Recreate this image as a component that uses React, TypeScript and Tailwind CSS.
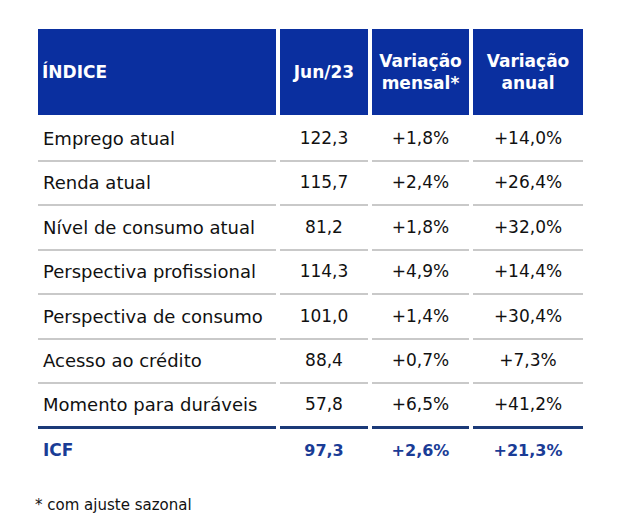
import React from 'react';

const rows = [
    { name: 'Emprego atual', jun: '122,3', mensal: '+1,8%', anual: '+14,0%' },
    { name: 'Renda atual', jun: '115,7', mensal: '+2,4%', anual: '+26,4%' },
    { name: 'Nível de consumo atual', jun: '81,2', mensal: '+1,8%', anual: '+32,0%' },
    { name: 'Perspectiva profissional', jun: '114,3', mensal: '+4,9%', anual: '+14,4%' },
    { name: 'Perspectiva de consumo', jun: '101,0', mensal: '+1,4%', anual: '+30,4%' },
    { name: 'Acesso ao crédito', jun: '88,4', mensal: '+0,7%', anual: '+7,3%' },
    { name: 'Momento para duráveis', jun: '57,8', mensal: '+6,5%', anual: '+41,2%' },
];

const font = { fontFamily: `'DejaVu Sans', 'Open Sans', sans-serif` };

const head = 'h-[86px] mb-[2px] bg-[#0a2f9f] text-white font-bold text-[17px] leading-[22px] flex items-center';

export default function App() {
    return (
        <div className="w-[631px] h-[529px] bg-white pt-[29px] pl-[38px]" style={font}>
            <div className="grid grid-cols-[238px_88px_97px_110px] gap-x-[4px] w-[545px]">
                {/* Header */}
                <div className={`${head} pl-[4px]`}>ÍNDICE</div>
                <div className={`${head} justify-center`}>Jun/23</div>
                <div className={`${head} justify-center text-center`}>
                    Variação<br />mensal*
                </div>
                <div className={`${head} justify-center text-center`}>
                    Variação<br />anual
                </div>

                {/* Body rows */}
                {rows.map((r, i) => {
                    const last = i === rows.length - 1;
                    const border = last ? 'border-b-[3px] border-[#1b3a78]' : 'border-b-2 border-[#c9c9c9]';
                    const cell = `h-[44.5px] flex items-center text-[#111] ${border}`;
                    return (
                        <React.Fragment key={i}>
                            <div className={`${cell} pl-[5px] text-[18px]`}>{r.name}</div>
                            <div className={`${cell} justify-center text-[17px]`}>{r.jun}</div>
                            <div className={`${cell} justify-center text-[17px]`}>{r.mensal}</div>
                            <div className={`${cell} justify-center text-[17px]`}>{r.anual}</div>
                        </React.Fragment>
                    );
                })}

                {/* ICF total */}
                <div className="h-[45px] flex items-center pl-[5px] text-[17px] font-bold text-[#1a3c96]">ICF</div>
                <div className="h-[45px] flex items-center justify-center text-[16px] font-bold text-[#1a3c96]">97,3</div>
                <div className="h-[45px] flex items-center justify-center text-[16px] font-bold text-[#1a3c96]">+2,6%</div>
                <div className="h-[45px] flex items-center justify-center text-[16px] font-bold text-[#1a3c96]">+21,3%</div>
            </div>

            <div className="mt-[20px] -ml-[3px] text-[15px] text-[#111]">* com ajuste sazonal</div>
        </div>
    );
}
